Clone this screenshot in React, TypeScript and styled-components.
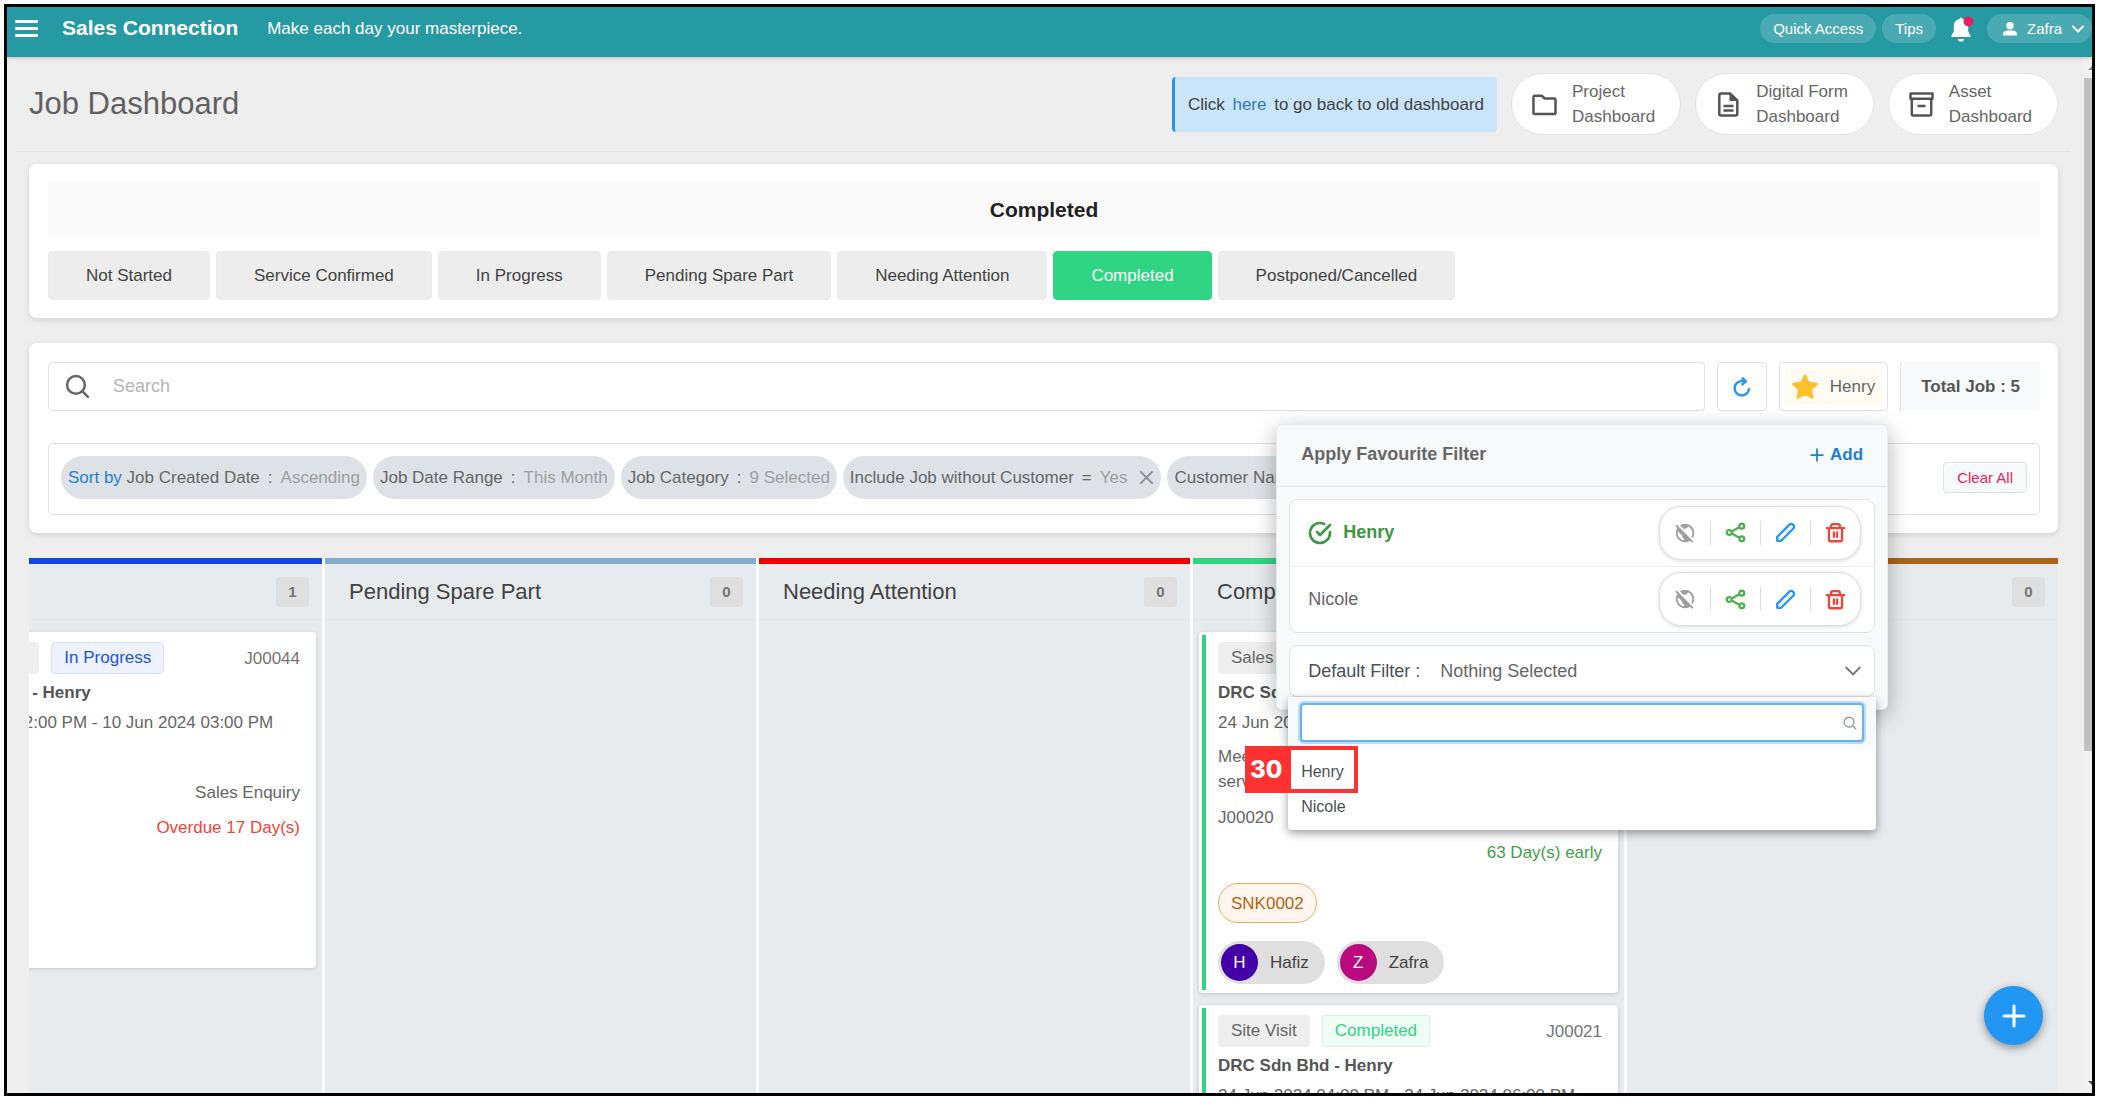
import React from "react";
import styled, { createGlobalStyle } from "styled-components";
import { MdPublicOff } from "react-icons/md";
import { FiCheckCircle } from "react-icons/fi";

const GlobalStyle = createGlobalStyle`
  *, *::before, *::after { box-sizing: border-box; }
  body {
    margin: 0;
    background: #fff;
    overflow: hidden;
  }
  body, button, input {
    font-family: "Liberation Sans", Arial, Helvetica, sans-serif;
    font-size: 17px;
    line-height: 25px;
    color: #666;
  }
  button { margin: 0; padding: 0; border: 0; background: none; cursor: pointer; }
  h1, h2, h3, p, ul { margin: 0; padding: 0; font-weight: 400; }
  ul { list-style: none; }
  svg { display: block; flex: none; }
`;

/* ---------- shell ---------- */

const Frame = styled.div`
  display: flex;
  flex-direction: column;
  height: calc(100vh - 15px);
  margin: 4px 9px 11px 4px;
  border: 3px solid #000;
  background: #eee;
  overflow: hidden;
  position: relative;
`;

const TopBar = styled.header`
  flex: none;
  display: flex;
  align-items: flex-start;
  height: 50px;
  padding: 7px 0 0 8px;
  background: #269aa3;
  box-shadow: 0 1px 4px rgba(0, 0, 0, 0.2);
  position: relative;
  z-index: 1;
`;

const MenuButton = styled.button`
  padding: 5px 0;
  margin-right: 24px;
`;

const Brand = styled.a`
  margin-right: 29px;
  font-size: 21px;
  line-height: 28px;
  font-weight: 700;
  color: #fff;
  text-decoration: none;
`;

const Tagline = styled.p`
  flex: 1;
  line-height: 30px;
  color: #fff;
`;

const TopPill = styled.button`
  display: flex;
  align-items: center;
  height: 29px;
  margin-right: 6px;
  padding: 0 13px 1px;
  border-radius: 15px;
  background: #4aaab3;
  font-size: 15px;
  color: #fff;
`;

const UserPill = styled(TopPill)`
  gap: 10px;
  margin-right: 0;
  padding: 0 8px 0 16px;
`;

const BellButton = styled.button`
  margin: 2px 12px 0 9px;
`;

const Body = styled.div`
  flex: 1;
  min-height: 0;
  display: flex;
`;

const Page = styled.main`
  flex: 1;
  min-width: 0;
  display: flex;
  flex-direction: column;
  padding: 0 13px 0 10px;
  overflow: hidden;
`;

const ScrollTrack = styled.div`
  flex: none;
  width: 9px;
  display: flex;
  flex-direction: column;
  align-items: flex-end;
  background: #f1f1f1;
`;

const ScrollArrow = styled.div<{ $down?: boolean }>`
  flex: none;
  width: 4px;
  height: 21px;
  display: flex;
  align-items: center;
  margin-top: ${(p) => (p.$down ? "auto" : "0")};
`;

const ScrollThumb = styled.div`
  width: 8px;
  height: 65%;
  background: #c1c1c1;
`;

/* ---------- title bar ---------- */

const TitleBar = styled.div`
  flex: none;
  display: flex;
  align-items: center;
  gap: 14px;
  padding: 16px 12px;
  border-bottom: 1px solid #e4e4e4;
`;

const PageTitle = styled.h1`
  flex: 1;
  font-size: 31px;
  line-height: 40px;
  color: #616161;
`;

const Notice = styled.p`
  padding: 15px 13px;
  border-left: 3px solid #2196f3;
  border-radius: 4px;
  background: #c8e5fc;
  color: #424242;
  a { margin: 0 3px; color: #337ab7; text-decoration: none; }
`;

const DashLink = styled.a`
  display: flex;
  align-items: center;
  gap: 15px;
  height: 62px;
  padding: 0 25px 0 20px;
  border: 1px solid #e4e4e4;
  border-radius: 31px;
  background: #fff;
  color: #666;
  text-decoration: none;
`;

/* ---------- panels ---------- */

const Sections = styled.div`
  flex: 1;
  min-height: 0;
  display: flex;
  flex-direction: column;
  gap: 25px;
  padding: 12px 12px 0;
`;

const Panel = styled.section`
  flex: none;
  padding: 19px 18px 18px 19px;
  border-radius: 8px;
  background: #fff;
  box-shadow: 0 2px 6px rgba(0, 0, 0, 0.12);
`;

const StatusHeading = styled.h2`
  margin-bottom: 12px;
  padding: 13px 14px 15px;
  background: #fafafa;
  text-align: center;
  font-size: 21px;
  line-height: 28px;
  font-weight: 700;
  color: #212121;
`;

const StatusTabs = styled.div`
  display: flex;
  flex-wrap: wrap;
  gap: 6px;
`;

const StatusTab = styled.button<{ $active?: boolean }>`
  height: 49px;
  padding: 0 37px;
  border: 1px solid ${(p) => (p.$active ? "#2fd583" : "#ebebeb")};
  border-radius: 4px;
  background: ${(p) => (p.$active ? "#2fd583" : "#ededed")};
  color: ${(p) => (p.$active ? "#fff" : "#424242")};
`;

const SearchRow = styled.div`
  display: flex;
  gap: 12px;
  margin-bottom: 32px;
`;

const SearchBox = styled.label`
  flex: 1;
  display: flex;
  align-items: center;
  gap: 23px;
  height: 49px;
  padding: 0 16px;
  border: 1px solid #e0e0e0;
  border-radius: 4px;
`;

const SearchInput = styled.input`
  flex: 1;
  border: 0;
  outline: 0;
  padding: 0;
  background: none;
  font-size: 18px;
  &::placeholder { color: #b5b5b5; opacity: 1; }
`;

const SquareButton = styled.button`
  display: flex;
  align-items: center;
  justify-content: center;
  width: 50px;
  height: 49px;
  border: 1px solid #e0e0e0;
  border-radius: 4px;
  color: #2196f3;
`;

const FavouriteAnchor = styled.div`
  position: relative;
`;

const FavouriteButton = styled.button`
  height: 49px;
  padding: 0 6px;
  border: 1px solid #e0e0e0;
  border-radius: 4px;
  background: #fff;
`;

const FavouriteLabel = styled.span`
  display: flex;
  align-items: center;
  gap: 12px;
  height: 37px;
  padding: 0 6px;
  background: #fffbf3;
`;

const TotalJobs = styled.div`
  padding: 12px 20px;
  border-left: 1px solid #dee2e6;
  background: #f8f9fa;
  font-weight: 700;
  color: #555;
`;

const FilterBar = styled.div`
  display: flex;
  align-items: center;
  justify-content: space-between;
  gap: 12px;
  padding: 12px 12px 15px;
  border: 1px solid #e0e0e0;
  border-radius: 4px;
`;

const ChipList = styled.div`
  display: flex;
  gap: 6px;
  min-width: 0;
  overflow: hidden;
`;

const Chip = styled.div`
  flex: none;
  display: flex;
  align-items: center;
  gap: 8px;
  height: 43px;
  padding: 0 7px;
  border-radius: 22px;
  background: #dee2e6;
  white-space: nowrap;
  b { font-weight: 400; color: #1e7fd6; }
  em { font-style: normal; color: #9e9e9e; }
`;

const ChipClose = styled.button`
  margin-left: 4px;
`;

const ClearButton = styled.button`
  flex: none;
  height: 31px;
  padding: 0 13px;
  border: 1px solid #dee2e6;
  border-radius: 4px;
  background: #f8f9fa;
  font-size: 15px;
  color: #e91e63;
`;

/* ---------- favourite filter popover ---------- */

const Popover = styled.div`
  position: absolute;
  z-index: 5;
  top: 62px;
  right: 0;
  width: 612px;
  border: 1px solid #e9ecef;
  border-radius: 6px;
  background: #f8f9fa;
  box-shadow: 0 6px 22px rgba(0, 0, 0, 0.3);
`;

const PopoverHead = styled.div`
  display: flex;
  align-items: center;
  justify-content: space-between;
  height: 62px;
  padding: 0 24px 2px;
  border-bottom: 1px solid #e3e6e9;
`;

const PopoverTitle = styled.h3`
  font-size: 18px;
  font-weight: 700;
`;

const AddButton = styled.button`
  display: flex;
  align-items: center;
  gap: 6px;
  font-weight: 700;
  color: #1e7fd6;
`;

const PopoverBody = styled.div`
  display: flex;
  flex-direction: column;
  gap: 12px;
  padding: 12px;
`;

const FilterList = styled.ul`
  border: 1px solid #dee2e6;
  border-radius: 9px;
  background: #fff;
`;

const FilterItem = styled.li<{ $applied?: boolean }>`
  display: flex;
  align-items: center;
  gap: 11px;
  height: 66px;
  padding: 0 13px 1px 18px;
  font-size: 18px;
  font-weight: ${(p) => (p.$applied ? 700 : 400)};
  color: ${(p) => (p.$applied ? "#3d9641" : "#666")};
  & + & { border-top: 1px solid #eee; }
`;

const ItemName = styled.span`
  flex: 1;
`;

const Actions = styled.div`
  display: flex;
  align-items: center;
  height: 54px;
  border: 1px solid #dedede;
  border-radius: 22px;
  background: #fff;
  box-shadow: 0 1px 4px rgba(0, 0, 0, 0.14);
`;

const ActionButton = styled.button<{ $color: string }>`
  display: flex;
  justify-content: center;
  align-items: center;
  width: 50px;
  height: 24px;
  color: ${(p) => p.$color};
  & + & { border-left: 1px solid #dedede; }
`;

const DefaultFilter = styled.div`
  position: relative;
`;

const DefaultButton = styled.button`
  display: flex;
  align-items: center;
  gap: 20px;
  width: 100%;
  height: 52px;
  padding: 0 13px 0 18px;
  border: 1px solid #dee2e6;
  border-radius: 8px;
  background: #fff;
  font-size: 18px;
  text-align: left;
`;

const DefaultLabel = styled.span`
  color: #495057;
`;

const Menu = styled.div`
  position: absolute;
  top: 100%;
  left: -1px;
  right: -1px;
  border-radius: 4px;
  background: #fff;
  box-shadow: 0 3px 10px rgba(0, 0, 0, 0.4);
`;

const MenuSearch = styled.div`
  padding: 6px 12px;
  background: #f8f9fa;
`;

const MenuSearchBox = styled.label`
  display: flex;
  align-items: center;
  height: 39px;
  padding: 0 5px;
  border: 2px solid #66b3f5;
  border-radius: 4px;
  background: #fff;
  box-shadow: 0 0 0 2px #b9dcfb;
`;

const Options = styled.div`
  padding: 6px 0;
`;

const Option = styled.button`
  display: block;
  width: 100%;
  height: 35px;
  padding: 0 13px;
  font-size: 16px;
  text-align: left;
  color: #495057;
`;

const Callout = styled.div`
  position: absolute;
  top: 49px;
  left: -43px;
  display: flex;
  align-items: stretch;
  height: 47px;
  pointer-events: none;
`;

const CalloutNumber = styled.span`
  display: flex;
  align-items: center;
  justify-content: center;
  width: 42px;
  background: #ff3131;
  font-family: Inter, "Liberation Sans", sans-serif;
  font-size: 24px;
  font-weight: 800;
  color: #fff;
`;

const CalloutBox = styled.span`
  width: 71px;
  border: 4px solid #ff3131;
`;

/* ---------- board ---------- */

const Board = styled.div`
  flex: 1;
  min-height: 0;
  display: flex;
  justify-content: flex-end;
  gap: 3px;
  background: #fbfbfb;
  overflow: hidden;
`;

const Column = styled.section<{ $accent: string }>`
  flex: 0 0 431px;
  border-top: 6px solid ${(p) => p.$accent};
  background: #e8ebee;
`;

const ColumnHead = styled.div`
  display: flex;
  align-items: center;
  justify-content: space-between;
  height: 56px;
  padding: 0 13px 0 24px;
  border-bottom: 1px solid #e4e6ea;
`;

const ColumnTitle = styled.h2`
  font-size: 22px;
  color: #424242;
`;

const Count = styled.span`
  width: 33px;
  border-radius: 4px;
  background: #dfdfdf;
  text-align: center;
  font-size: 15px;
  line-height: 30px;
  font-weight: 700;
  color: #757575;
`;

const Cards = styled.div`
  display: flex;
  flex-direction: column;
  gap: 12px;
  padding: 12px 6px;
`;

const Card = styled.article`
  display: flex;
  padding: 3px;
  border-radius: 4px;
  background: #fff;
  box-shadow: 0 1px 4px rgba(0, 0, 0, 0.16);
`;

const CardBar = styled.div<{ $color: string }>`
  flex: none;
  width: 4px;
  background: ${(p) => p.$color};
`;

const CardBody = styled.div`
  flex: 1;
  min-width: 0;
  padding: 7px 13px 6px 12px;
`;

const CardTop = styled.div`
  display: flex;
  align-items: center;
  gap: 12px;
  height: 32px;
  margin-bottom: 6px;
`;

const Tag = styled.span<{ $ink?: string; $fill?: string; $line?: string }>`
  padding: 2px 12px;
  border: 1px solid ${(p) => p.$line || "#eee"};
  border-radius: 4px;
  background: ${(p) => p.$fill || "#eee"};
  color: ${(p) => p.$ink || "#666"};
  line-height: 26px;
`;

const JobNo = styled.span`
  margin-left: auto;
  color: #757575;
`;

const CardTitle = styled.h3`
  margin-bottom: 5px;
  font-size: 17px;
  font-weight: 700;
  color: #555;
`;

const Description = styled.p`
  min-height: 25px;
  margin: 9px 0 11px;
`;

const RefRow = styled.div`
  display: flex;
  justify-content: space-between;
  margin-bottom: 10px;
`;

const Timing = styled.p<{ $late?: boolean }>`
  margin-bottom: 18px;
  text-align: right;
  color: ${(p) => (p.$late ? "#f44336" : "#43a047")};
`;

const AssetChip = styled.span`
  display: inline-flex;
  align-items: center;
  height: 40px;
  padding: 0 12px;
  border: 1px solid #f5a95c;
  border-radius: 20px;
  background: #fff6ef;
  color: #b3620e;
`;

const People = styled.div`
  display: flex;
  gap: 12px;
  margin-top: 18px;
`;

const Person = styled.span`
  display: flex;
  align-items: center;
  gap: 12px;
  height: 43px;
  padding: 0 16px 0 3px;
  border-radius: 22px;
  background: #dfdfdf;
  color: #424242;
`;

const Avatar = styled.span<{ $color: string }>`
  width: 37px;
  border-radius: 50%;
  background: ${(p) => p.$color};
  text-align: center;
  line-height: 37px;
  color: #fff;
`;

const AddFab = styled.button`
  position: absolute;
  right: 49px;
  bottom: 48px;
  display: flex;
  align-items: center;
  justify-content: center;
  width: 59px;
  height: 59px;
  border-radius: 50%;
  background: #2196f3;
  box-shadow: 0 3px 8px rgba(0, 0, 0, 0.4);
`;

/* ---------- icons ---------- */

type StrokeProps = { size: number; d: string; width?: number; color?: string };

const Stroke = ({ size, d, width = 2, color = "currentColor" }: StrokeProps) => (
  <svg width={size} height={size} viewBox="0 0 24 24" fill="none" stroke={color}
    strokeWidth={width} strokeLinecap="round" strokeLinejoin="round" aria-hidden="true">
    <path d={d} />
  </svg>
);

const SEARCH = "M19 10.500a8.500 8.500 0 1 1-17 0a8.500 8.500 0 0 1 17 0M17 17l5 5";
const CHEVRON = "M2 7l10 10L22 7";
const PLUS = "M12 2v20M2 12h20";
const CROSS = "M3 3l18 18M21 3L3 21";
const PENCIL = "M2.500 21.500v-4.500L16.500 3a3.200 3.200 0 0 1 4.500 4.500L7 21.500z";
const SHARE = "M7.600 12a2.800 2.800 0 1 1-5.600 0a2.800 2.800 0 0 1 5.600 0M22 4.800a2.800 2.800 0 1 1-5.600 0a2.800 2.800 0 0 1 5.600 0M22 19.200a2.800 2.800 0 1 1-5.600 0a2.800 2.800 0 0 1 5.600 0M7.600 10.800l8.900-4.700M7.600 13.200l8.900 4.700";
const TRASH = "M2 7h20M4.500 7v13a2 2 0 0 0 2 2h11a2 2 0 0 0 2-2V7M7 7V4.500a2 2 0 0 1 2-2h6a2 2 0 0 1 2 2V7M10.200 12v5M13.800 12v5";

const FolderIcon = () => (
  <svg width="25" height="25" viewBox="0 0 25 25" fill="none" stroke="#555"
    strokeWidth="2.500" strokeLinejoin="round" aria-hidden="true">
    <path d="M1.500 21V5a1.200 1.200 0 0 1 1.200-1.200h7L12.700 6.500h9.600a1.200 1.200 0 0 1 1.200 1.200V21a1 1 0 0 1-1 1h-20a1 1 0 0 1-1-1z" />
  </svg>
);

const FileIcon = () => (
  <svg width="25" height="25" viewBox="0 0 25 25" fill="none" stroke="#555"
    strokeWidth="2.500" strokeLinejoin="round" aria-hidden="true">
    <path d="M14 1.500H5a1.700 1.700 0 0 0-1.700 1.700v18.600A1.700 1.700 0 0 0 5 23.500h14.600a1.700 1.700 0 0 0 1.700-1.700V8.500z" />
    <path d="M14 1.500v7h7.300z" fill="#555" strokeWidth="1" />
    <path d="M7.500 14h10M7.500 18.500h10" />
  </svg>
);

const ArchiveIcon = () => (
  <svg width="25" height="25" viewBox="0 0 25 25" fill="none" stroke="#555"
    strokeWidth="2.500" strokeLinejoin="round" aria-hidden="true">
    <path d="M1.500 1.500h22v5.200h-22zM2.800 6.700v15.300a1.500 1.500 0 0 0 1.500 1.500h16.400a1.500 1.500 0 0 0 1.500-1.500V6.700M8.500 14h8" />
  </svg>
);

const RefreshIcon = () => (
  <svg width="18" height="20" viewBox="0 0 18 20" fill="none" stroke="currentColor"
    strokeWidth="2.400" aria-hidden="true">
    <path d="M16 11.300a7.200 7.200 0 1 1-7.200-7.200h3.500" />
    <path d="M8.800.600l4 3.700-4 3.700" />
  </svg>
);

const Star = () => (
  <svg width="26" height="26" viewBox="0 0 24 24" fill="#fbc02d" stroke="#fbc02d"
    strokeWidth="2.400" strokeLinejoin="round" aria-hidden="true">
    <path d="M12 1.600l3.200 6.600 7.400 1-5.400 5 1.400 7.400L12 18.100l-6.600 3.500 1.400-7.400-5.400-5 7.400-1z" />
  </svg>
);

const Bell = () => (
  <svg width="24" height="26" viewBox="0 0 24 26" aria-hidden="true">
    <path d="M8.500 3a1.500 1.500 0 0 1 3 0c3.700.800 5.700 3.500 5.700 7v5.500l2.300 4V21H.500v-1.500l2.300-4V10c0-3.500 2-6.200 5.700-7zM7 23h6a3 2.600 0 0 1-6 0z" fill="#fff" />
    <circle cx="17.500" cy="5.500" r="5" fill="#e91e63" />
  </svg>
);

const UserIcon = () => (
  <svg width="14" height="14" viewBox="0 0 14 14" fill="#fff" aria-hidden="true">
    <circle cx="7" cy="3.700" r="3.700" />
    <path d="M0 13.500V12c0-2.200 2-3.500 4.500-3.500h5C12 8.500 14 9.800 14 12v1.500z" />
  </svg>
);

const Bars = () => (
  <svg width="23" height="19" viewBox="0 0 23 19" fill="#fff" aria-hidden="true">
    <rect width="23" height="3" y="1" rx="1" />
    <rect width="23" height="3" y="8" rx="1" />
    <rect width="23" height="3" y="15" rx="1" />
  </svg>
);

/* ---------- data ---------- */

const statuses = ["Not Started", "Service Confirmed", "In Progress", "Pending Spare Part",
  "Needing Attention", "Completed", "Postponed/Cancelled"];

type Job = {
  category: string; status: string; ink: string; fill: string; line: string; bar: string;
  no: string; date: string; text?: React.ReactNode; refNo?: string; kind?: string;
  timing: string; late?: boolean; asset: string; people: [string, string][];
};

const green = { status: "Completed", ink: "#2fd583", fill: "#f0fcf6", line: "#d3f5e4", bar: "#2fd583" };

const progressJobs: Job[] = [{
  category: "Maintenance", status: "In Progress", ink: "#2354dd", fill: "#edf2fe", line: "#d5e0fb",
  bar: "#1447dc", no: "J00044", date: "10 Jun 2024 02:00 PM - 10 Jun 2024 03:00 PM",
  kind: "Sales Enquiry", timing: "Overdue 17 Day(s)", late: true, asset: "SNK0001",
  people: [["Hafiz", "#4300a8"]],
}];

const completedJobs: Job[] = [
  { ...green, category: "Sales Enquiry", no: "J00020", date: "24 Jun 2024 01:00 PM - 24 Jun 2024 02:00 PM",
    text: <>Meeting with the client about<br />service</>, refNo: "J00020", timing: "63 Day(s) early",
    asset: "SNK0002", people: [["Hafiz", "#4300a8"], ["Zafra", "#b90a80"]] },
  { ...green, category: "Site Visit", no: "J00021", date: "24 Jun 2024 04:00 PM - 24 Jun 2024 06:00 PM",
    timing: "63 Day(s) early", asset: "SNK0002", people: [["Zafra", "#b90a80"]] },
];

const columns: { title: string; count: number; accent: string; jobs: Job[] }[] = [
  { title: "In Progress", count: 1, accent: "#1447dc", jobs: progressJobs },
  { title: "Pending Spare Part", count: 0, accent: "#85abca", jobs: [] },
  { title: "Needing Attention", count: 0, accent: "#ef0000", jobs: [] },
  { title: "Completed", count: 2, accent: "#2fd583", jobs: completedJobs },
  { title: "Postponed/Cancelled", count: 0, accent: "#ab6413", jobs: [] },
];

const JobCard = ({ job }: { job: Job }) => (
  <Card>
    <CardBar $color={job.bar} />
    <CardBody>
      <CardTop>
        <Tag>{job.category}</Tag>
        <Tag $ink={job.ink} $fill={job.fill} $line={job.line}>{job.status}</Tag>
        <JobNo>{job.no}</JobNo>
      </CardTop>
      <CardTitle>DRC Sdn Bhd - Henry</CardTitle>
      <p>{job.date}</p>
      <Description>{job.text}</Description>
      <RefRow><span>{job.refNo}&nbsp;</span><span>{job.kind}</span></RefRow>
      <Timing $late={job.late}>{job.timing}</Timing>
      <AssetChip>{job.asset}</AssetChip>
      <People>
        {job.people.map(([name, color]) => (
          <Person key={name}><Avatar $color={color}>{name[0]}</Avatar>{name}</Person>
        ))}
      </People>
    </CardBody>
  </Card>
);

const FilterActions = ({ name }: { name: string }) => (
  <Actions>
    <ActionButton $color="#9e9e9e" aria-label={`Make ${name} public`}><MdPublicOff size={22} /></ActionButton>
    <ActionButton $color="#4caf50" aria-label={`Share ${name}`}><Stroke size={21} d={SHARE} width={2.6} /></ActionButton>
    <ActionButton $color="#2196f3" aria-label={`Edit ${name}`}><Stroke size={21} d={PENCIL} width={2.6} /></ActionButton>
    <ActionButton $color="#f44336" aria-label={`Delete ${name}`}><Stroke size={21} d={TRASH} width={2.6} /></ActionButton>
  </Actions>
);

const FavouritePopover = () => (
  <Popover>
    <PopoverHead>
      <PopoverTitle>Apply Favourite Filter</PopoverTitle>
      <AddButton><Stroke size={14} d={PLUS} width={3} />Add</AddButton>
    </PopoverHead>
    <PopoverBody>
      <FilterList>
        <FilterItem $applied>
          <FiCheckCircle size={24} strokeWidth={2.6} />
          <ItemName>Henry</ItemName>
          <FilterActions name="Henry" />
        </FilterItem>
        <FilterItem>
          <ItemName>Nicole</ItemName>
          <FilterActions name="Nicole" />
        </FilterItem>
      </FilterList>
      <DefaultFilter>
        <DefaultButton aria-haspopup="listbox" aria-expanded="true">
          <DefaultLabel>Default Filter :</DefaultLabel>
          <ItemName>Nothing Selected</ItemName>
          <Stroke size={16} d={CHEVRON} width={3} color="#6c757d" />
        </DefaultButton>
        <Menu>
          <MenuSearch>
            <MenuSearchBox>
              <SearchInput aria-label="Search filters" />
              <Stroke size={14} d={SEARCH} color="#868e96" />
            </MenuSearchBox>
          </MenuSearch>
          <Options role="listbox" aria-label="Default filter">
            <Option role="option">Henry</Option>
            <Option role="option">Nicole</Option>
          </Options>
          <Callout>
            <CalloutNumber>30</CalloutNumber>
            <CalloutBox />
          </Callout>
        </Menu>
      </DefaultFilter>
    </PopoverBody>
  </Popover>
);

export default function App() {
  return (
    <>
      <GlobalStyle />
      <Frame>
        <TopBar>
          <MenuButton aria-label="Menu"><Bars /></MenuButton>
          <Brand href="#">Sales Connection</Brand>
          <Tagline>Make each day your masterpiece.</Tagline>
          <TopPill>Quick Access</TopPill>
          <TopPill>Tips</TopPill>
          <BellButton aria-label="Notifications"><Bell /></BellButton>
          <UserPill>
            <UserIcon />
            Zafra
            <Stroke size={12} d={CHEVRON} width={4} />
          </UserPill>
        </TopBar>
        <Body>
          <Page>
            <TitleBar>
              <PageTitle>Job Dashboard</PageTitle>
              <Notice>Click <a href="#">here</a> to go back to old dashboard</Notice>
              <DashLink href="#"><FolderIcon /><span>Project<br />Dashboard</span></DashLink>
              <DashLink href="#"><FileIcon /><span>Digital Form<br />Dashboard</span></DashLink>
              <DashLink href="#"><ArchiveIcon /><span>Asset<br />Dashboard</span></DashLink>
            </TitleBar>
            <Sections>
              <Panel>
                <StatusHeading>Completed</StatusHeading>
                <StatusTabs>
                  {statuses.map((s) => (
                    <StatusTab key={s} $active={s === "Completed"}>{s}</StatusTab>
                  ))}
                </StatusTabs>
              </Panel>
              <Panel>
                <SearchRow>
                  <SearchBox>
                    <Stroke size={25} d={SEARCH} width={2.4} />
                    <SearchInput placeholder="Search" aria-label="Search jobs" />
                  </SearchBox>
                  <SquareButton aria-label="Refresh"><RefreshIcon /></SquareButton>
                  <FavouriteAnchor>
                    <FavouriteButton>
                      <FavouriteLabel><Star />Henry</FavouriteLabel>
                    </FavouriteButton>
                    <FavouritePopover />
                  </FavouriteAnchor>
                  <TotalJobs>Total Job : 5</TotalJobs>
                </SearchRow>
                <FilterBar>
                  <ChipList>
                    <Chip><span><b>Sort by</b> Job Created Date</span><span>:</span><em>Ascending</em></Chip>
                    <Chip><span>Job Date Range</span><span>:</span><em>This Month</em></Chip>
                    <Chip><span>Job Category</span><span>:</span><em>9 Selected</em></Chip>
                    <Chip>
                      <span>Include Job without Customer</span><span>=</span><em>Yes</em>
                      <ChipClose aria-label="Remove"><Stroke size={15} d={CROSS} width={3} color="#8e8e8e" /></ChipClose>
                    </Chip>
                    <Chip><span>Customer Name</span><span>=</span><em>DRC Sdn Bhd</em></Chip>
                  </ChipList>
                  <ClearButton>Clear All</ClearButton>
                </FilterBar>
              </Panel>
              <Board>
                {columns.map((c) => (
                  <Column key={c.title} $accent={c.accent}>
                    <ColumnHead>
                      <ColumnTitle>{c.title}</ColumnTitle>
                      <Count>{c.count}</Count>
                    </ColumnHead>
                    <Cards>{c.jobs.map((j) => <JobCard key={j.no} job={j} />)}</Cards>
                  </Column>
                ))}
              </Board>
            </Sections>
          </Page>
          <ScrollTrack>
            <ScrollArrow>
              <svg width="4" height="4" viewBox="0 0 4 4" aria-hidden="true"><path d="M0 4L4 0V4z" fill="#8a8a8a" /></svg>
            </ScrollArrow>
            <ScrollThumb />
            <ScrollArrow $down>
              <svg width="4" height="4" viewBox="0 0 4 4" aria-hidden="true"><path d="M0 0L4 4V0z" fill="#505050" /></svg>
            </ScrollArrow>
          </ScrollTrack>
        </Body>
        <AddFab aria-label="Add job"><Stroke size={24} d={PLUS} width={3} color="#fff" /></AddFab>
      </Frame>
    </>
  );
}
